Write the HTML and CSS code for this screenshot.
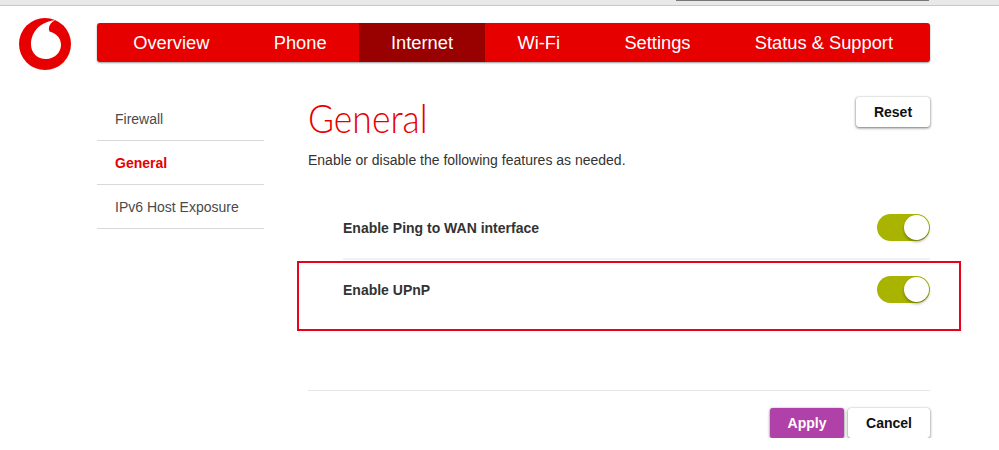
FILE: index.html
```html
<!DOCTYPE html>
<html lang="en">
<head>
    <meta charset="UTF-8">
    <meta name="viewport" content="width=device-width, initial-scale=1.0">
    <title>General</title>
    <link rel="stylesheet" href="styles.css">
</head>
<body>
    <div class="top-strip"><div class="top-tab"></div></div>

    <header class="header">
        <svg class="logo" viewBox="0 0 52 52" aria-label="Vodafone">
            <circle cx="26" cy="26" r="26" fill="#e60000"/>
            <path fill="#fff" d="M36.5 2.2C22 3.5 12 13 12 26.5C12 35 18.5 41 27 41C35.5 41 42 34.5 42 27C42 19 36.5 15.5 30.5 13.5C28.5 8.5 32 4 36.5 2.2Z"/>
        </svg>
        <nav class="nav">
            <a class="nav-item">Overview</a>
            <a class="nav-item">Phone</a>
            <a class="nav-item active">Internet</a>
            <a class="nav-item">Wi-Fi</a>
            <a class="nav-item">Settings</a>
            <a class="nav-item">Status &amp; Support</a>
        </nav>
    </header>

    <div class="content">
        <aside class="sidebar">
            <a class="side-item">Firewall</a>
            <a class="side-item active">General</a>
            <a class="side-item">IPv6 Host Exposure</a>
        </aside>

        <main class="main">
            <div class="title-row">
                <h1 class="title">General</h1>
                <button class="btn reset-btn">Reset</button>
            </div>
            <p class="intro">Enable or disable the following features as needed.</p>

            <div class="option option-first">
                <span class="option-label">Enable Ping to WAN interface</span>
                <span class="toggle"><span class="knob"></span></span>
            </div>
            <div class="option option-marked">
                <span class="option-label">Enable UPnP</span>
                <span class="toggle"><span class="knob"></span></span>
                <div class="red-box"></div>
            </div>

            <div class="actions">
                <button class="btn apply-btn">Apply</button>
                <button class="btn cancel-btn">Cancel</button>
            </div>
        </main>
    </div>
</body>
</html>
```

FILE: styles.css
```css
* {
    box-sizing: border-box;
}
body {
    margin: 0;
    font-family: "Liberation Sans", Arial, sans-serif;
    font-size: 14px;
    color: #333;
    background-color: #fff;
    overflow: hidden;
}
.top-strip {
    height: 6px;
    background-color: #e8e8e8;
    border-bottom: 1px solid #c8c8c8;
    padding-left: 676px;
}
.top-tab {
    width: 253px;
    height: 1px;
    background-color: #777;
}
.header {
    display: flex;
    align-items: flex-start;
    padding: 12px 0 0 19px;
}
.logo {
    width: 52px;
    height: 52px;
    margin-right: 26px;
}
.nav {
    display: flex;
    width: 833px;
    height: 39px;
    margin-top: 5px;
    padding-left: 4px;
    background-color: #e60000;
    border-radius: 3px;
    box-shadow: 0 1px 2px rgba(0, 0, 0, 0.4);
}
.nav-item {
    padding: 0 32.2px;
    line-height: 39px;
    font-size: 18.3px;
    color: #fff;
    white-space: nowrap;
}
.nav-item.active {
    background-color: #990000;
}
.content {
    display: flex;
    margin-top: 27px;
    padding-left: 97px;
}
.sidebar {
    width: 167px;
    margin-right: 44px;
}
.side-item {
    display: block;
    height: 44px;
    padding-left: 18px;
    line-height: 44px;
    color: #4a4a4a;
    border-bottom: 1px solid #d9d9d9;
}
.side-item.active {
    font-weight: bold;
    color: #e60000;
}
.main {
    width: 622px;
}
.title-row {
    display: flex;
    justify-content: space-between;
    align-items: flex-start;
}
.title {
    margin: 0;
    font-family: Lato, sans-serif;
    font-size: 39px;
    font-weight: 300;
    line-height: 42px;
    color: #e60000;
    transform: scaleX(0.91);
    transform-origin: left;
}
.intro {
    margin: 12px 0 0;
    line-height: 18px;
}
.btn {
    height: 30px;
    border: 0;
    border-radius: 3px;
    font-family: inherit;
    font-size: 14px;
    font-weight: bold;
    color: #111;
    background-color: #fff;
    box-shadow: 0 1px 3px rgba(0, 0, 0, 0.55), 0 0 1px rgba(0, 0, 0, 0.3);
}
.reset-btn {
    width: 74px;
}
.option {
    position: relative;
    display: flex;
    justify-content: space-between;
    margin-left: 35px;
    font-weight: bold;
}
.option-first {
    height: 45px;
    margin-top: 46px;
    border-bottom: 2px solid #f2f2f2;
}
.option-marked {
    height: 131px;
    padding-top: 17px;
    border-bottom: 1px solid #e6e6e6;
    margin-left: 0;
    padding-left: 35px;
}
.option-label {
    line-height: 27px;
}
.toggle {
    display: flex;
    justify-content: flex-end;
    align-items: center;
    width: 53px;
    height: 27px;
    margin-top: -1px;
    padding-right: 1px;
    background-color: #a8b400;
    border-radius: 14px;
}
.knob {
    width: 25px;
    height: 25px;
    background-color: #fff;
    border-radius: 50%;
    box-shadow: 0 2px 3px rgba(0, 0, 0, 0.3);
}
.red-box {
    position: absolute;
    top: 1px;
    left: -11px;
    width: 664px;
    height: 70px;
    border: 2px solid #e8001c;
}
.actions {
    display: flex;
    justify-content: flex-end;
    gap: 4px;
    margin-top: 17px;
}
.apply-btn {
    width: 74px;
    color: #fff;
    background-color: #b041a8;
}
.cancel-btn {
    width: 82px;
}
```
